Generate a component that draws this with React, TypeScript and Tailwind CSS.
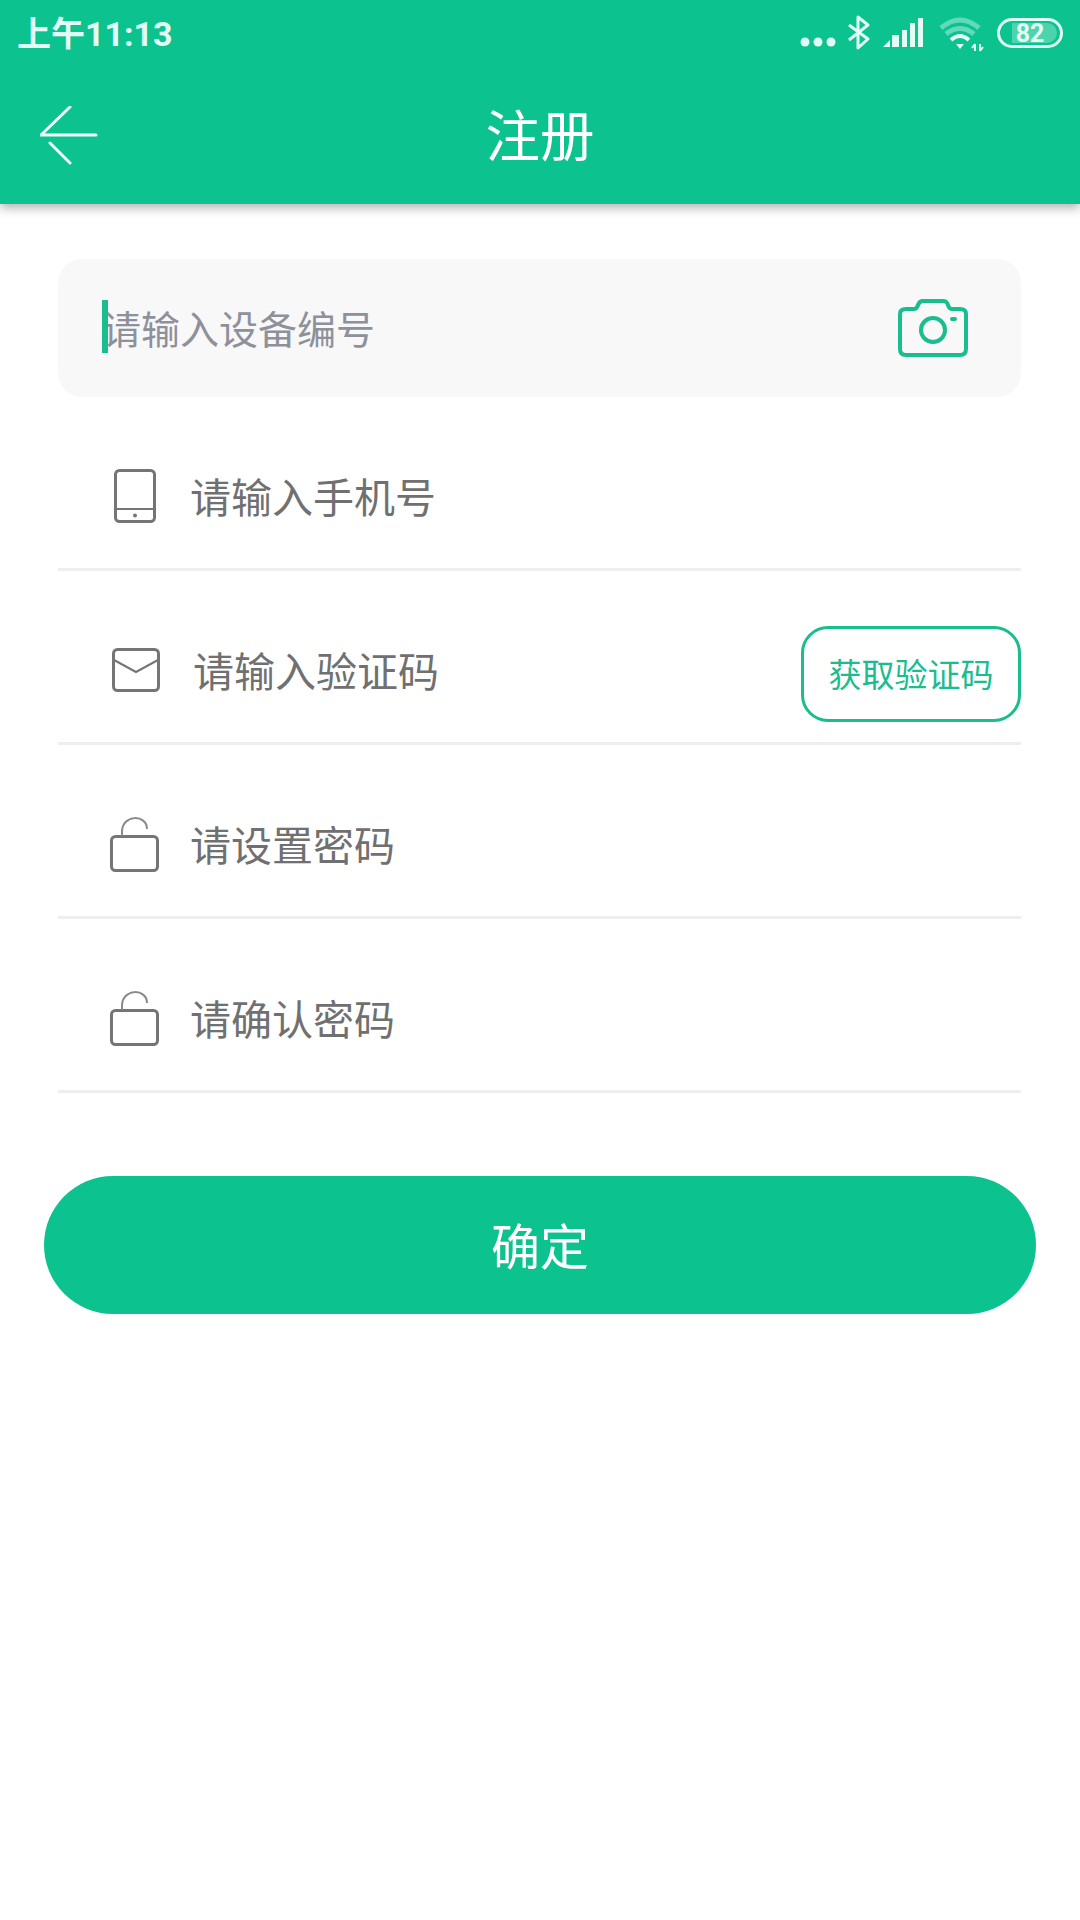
const cjk = "font-['Noto_Sans_CJK_SC','Noto_Sans',sans-serif]"

const StatusIcons = () => (
    <svg width="196" height="38" viewBox="0 0 196 38" fill="none">
        <circle cx="8" cy="27" r="4.5" fill="#e3fdf5" />
        <circle cx="21" cy="27" r="4.5" fill="#e3fdf5" />
        <circle cx="34" cy="27" r="4.5" fill="#e3fdf5" />
        <path d="M52 10 L71 24 L61 33 V2 L71 10 L52 25" stroke="#e3fdf5" strokeWidth="3" strokeLinejoin="round" />
        <path d="M86 32 L93 25 V32 Z" fill="#e3fdf5" />
        <rect x="95" y="20" width="7" height="12" fill="#e3fdf5" />
        <rect x="105" y="15" width="5" height="17" fill="#e3fdf5" />
        <rect x="113" y="8" width="5" height="24" fill="#e3fdf5" />
        <rect x="121" y="3" width="5" height="29" fill="#e3fdf5" />
        <path d="M144 13 Q163 -3 182 13" stroke="#e3fdf5" strokeOpacity="0.4" strokeWidth="5" />
        <path d="M149 19 Q163 8 177 19" stroke="#e3fdf5" strokeOpacity="0.4" strokeWidth="5" />
        <path d="M154 25 Q163 17 172 25" stroke="#e3fdf5" strokeWidth="4" />
        <path d="M159 29 H167 L163 34 Z" fill="#e3fdf5" />
        <path d="M178 29 V36 M178 29 L175 33 M183 29 V36 M183 36 L186 32" stroke="#e3fdf5" strokeWidth="2" />
    </svg>
)

const StatusBar = () => (
    <div className="h-[68px] flex items-center justify-between pl-[17px] pr-[17px] text-[#e3fdf5]">
        <span className="text-[34px] font-bold font-['Roboto','Noto_Sans_CJK_SC',sans-serif] leading-none">上午11:13</span>
        <div className="self-start mt-[15px] flex items-start">
            <StatusIcons />
            <div className="relative mt-[3px] ml-[4px] w-[66px] h-[30px] border-[3px] border-[#e3fdf5] rounded-full">
                <div className="absolute left-[12px] top-[2px] w-[45px] h-[20px] bg-[#e3fdf5]/30 rounded-r-full"></div>
                <span className="absolute inset-0 flex items-center justify-center text-[25px] font-bold font-['Roboto',sans-serif] leading-none">82</span>
            </div>
        </div>
    </div>
)

const Header = () => (
    <div className="relative h-[204px] bg-[#0cc28f] shadow-[0_4px_10px_rgba(0,0,0,0.3)]">
        <StatusBar />
        <div className="h-[136px] grid grid-cols-[1fr_auto_1fr] items-center text-white">
            <svg width="60" height="60" viewBox="0 0 60 60" fill="none" className="ml-[40px]">
                <path d="M1 29 H56 M1 29 L30 1 M10 37 L30 57" stroke="#f0fffa" strokeWidth="3" strokeLinecap="round" />
            </svg>
            <span className="text-[54.5px] leading-none pb-[5px]">注册</span>
            <div></div>
        </div>
    </div>
)

const PhoneIcon = () => (
    <svg width="42" height="54" viewBox="0 0 42 54" fill="none" className="ml-[56px] mr-[34px]">
        <rect x="1.5" y="1.5" width="39" height="51" rx="4" stroke="#757575" strokeWidth="3" />
        <path d="M1.5 40 H40.5" stroke="#757575" strokeWidth="2" />
        <circle cx="21" cy="46.5" r="2" fill="#757575" />
    </svg>
)

const MailIcon = () => (
    <svg width="48" height="44" viewBox="0 0 48 44" fill="none" className="ml-[54px] mr-[33px]">
        <rect x="1.5" y="1.5" width="45" height="41" rx="4" stroke="#757575" strokeWidth="3" />
        <path d="M2 12 L24 24 L46 12" stroke="#757575" strokeWidth="2" />
    </svg>
)

const LockIcon = () => (
    <svg width="49" height="55" viewBox="0 0 49 55" fill="none" className="ml-[52px] mr-[31px]">
        <rect x="1.5" y="19.5" width="46" height="34" rx="4" stroke="#757575" strokeWidth="3" />
        <path d="M12 19 V15 C12 -3 37 -3 37 12" stroke="#8a8a8a" strokeWidth="2" />
    </svg>
)

const CameraIcon = () => (
    <svg width="70" height="58" viewBox="0 0 70 58" fill="none">
        <path d="M8 10 H16 C19 10 19 8 20 6 C21 3 23 2 25 2 H45 C48 2 49 3 50 6 C51 8 51 10 54 10 H62 C66 10 68 12 68 15 V50 C68 54 66 56 62 56 H8 C4 56 2 54 2 50 V15 C2 12 4 10 8 10 Z" stroke="#19bd8e" strokeWidth="4" />
        <circle cx="35" cy="31" r="12" stroke="#19bd8e" strokeWidth="4" />
        <rect x="52" y="18" width="7" height="4" rx="2" fill="#19bd8e" />
    </svg>
)

interface RowProps {
    icon : React.ReactNode,
    label : string,
    children? : React.ReactNode
}

const Row = ({ icon, label, children } : RowProps) => (
    <div className="relative h-[174px] pt-[27px] flex items-center border-b-[3px] border-[#eeeeee]">
        {icon}
        <span className="text-[41px] leading-none pb-[2px] text-[#707070]">{label}</span>
        {children}
    </div>
)

export default function App() {
    return (
        <div className={`${cjk} min-h-[1920px] bg-white`}>
            <Header />
            <div className="pt-[55px] pl-[58px] pr-[59px]">
                <div className="h-[138px] bg-[#f8f8f8] rounded-[24px] flex items-center justify-between pl-[44px] pr-[53px]">
                    <div className="relative">
                        <div className="absolute left-0 top-[-7px] w-[6px] h-[53px] bg-[#19bd8e]"></div>
                        <span className="text-[39px] leading-[40px] text-[#8e919b]">请输入设备编号</span>
                    </div>
                    <CameraIcon />
                </div>
                <Row icon={<PhoneIcon />} label="请输入手机号" />
                <Row icon={<MailIcon />} label="请输入验证码">
                    <button className="absolute right-0 top-[55px] w-[220px] h-[96px] pb-[2px] border-[3px] border-[#19bd8e] rounded-[27px] bg-white text-[33px] leading-none text-[#19bd8e]">获取验证码</button>
                </Row>
                <Row icon={<LockIcon />} label="请设置密码" />
                <Row icon={<LockIcon />} label="请确认密码" />
            </div>
            <button className="block mt-[83px] ml-[44px] w-[992px] h-[138px] pb-[4px] rounded-full bg-[#0cc28f] text-white text-[49px] leading-none">确定</button>
        </div>
    )
}
